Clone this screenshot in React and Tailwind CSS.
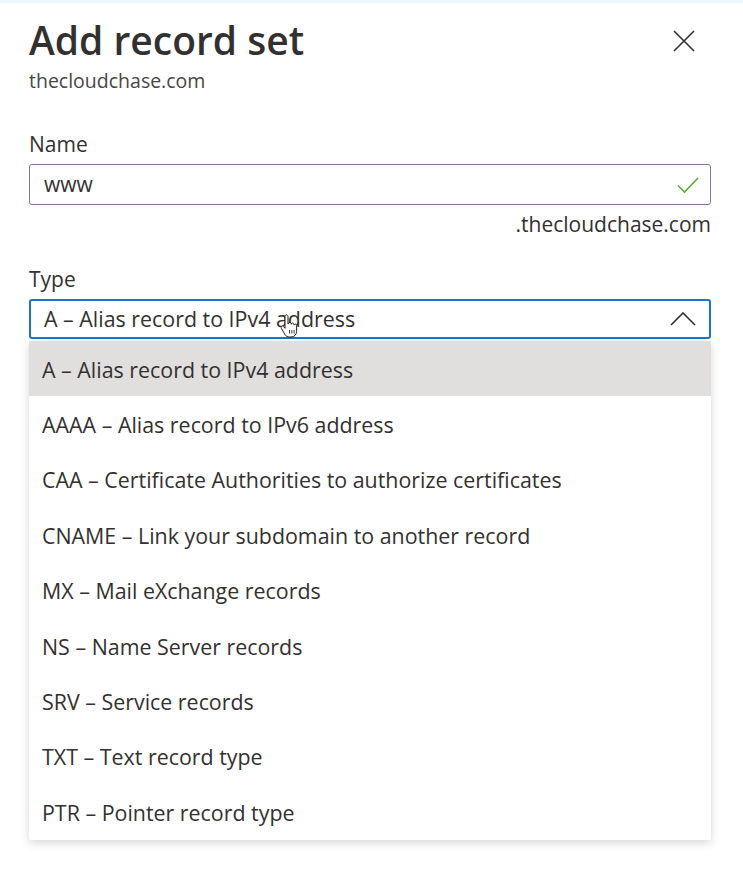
import React from "react";

const options = [
  "A – Alias record to IPv4 address",
  "AAAA – Alias record to IPv6 address",
  "CAA – Certificate Authorities to authorize certificates",
  "CNAME – Link your subdomain to another record",
  "MX – Mail eXchange records",
  "NS – Name Server records",
  "SRV – Service records",
  "TXT – Text record type",
  "PTR – Pointer record type",
];

export default function App() {
  return (
    <div
      className="w-[743px] h-[886px] bg-white text-[#323130] overflow-hidden"
      style={{ fontFamily: '"Open Sans", "Noto Sans", sans-serif' }}
    >
      <div className="h-[3px] bg-[#eaf8fb]" />
      <div className="pl-[29px] pr-[32px] pt-[14px]">
        <div className="flex items-start justify-between">
          <div>
            <h1 className="text-[39px] leading-[46px] font-semibold">Add record set</h1>
            <div className="text-[19.5px] leading-[26px] text-[#484644] mt-[5px]">thecloudchase.com</div>
          </div>
          <button className="mt-[10px] mr-[13px] w-[28px] h-[28px] flex items-center justify-center">
            <svg width="22" height="22" viewBox="0 0 22 22" fill="none" stroke="#323130" strokeWidth="1.6">
              <path d="M1 1 L21 21 M21 1 L1 21" />
            </svg>
          </button>
        </div>

        <div className="mt-[37px] text-[21px] leading-[26px]">Name</div>
        <div className="mt-[7px] h-[41px] border border-[#8e7096] rounded-[3px] flex items-center pl-[14px] pr-[11px]">
          <span className="flex-1 text-[21px]">www</span>
          <svg width="22" height="18" viewBox="0 0 22 18" fill="none" stroke="#5fa83a" strokeWidth="1.6">
            <path d="M1 9.5 L7.5 16 L21 2" />
          </svg>
        </div>
        <div className="mt-[6px] text-right text-[21px] leading-[26px] text-[#323130]">.thecloudchase.com</div>

        <div className="mt-[29px] text-[21px] leading-[26px]">Type</div>
        <div className="relative mt-[7px]">
          <div className="h-[40px] border-2 border-[#1a73c4] rounded-[3px] flex items-center pl-[13px] pr-[13px]">
            <span className="flex-1 text-[21.4px] pt-[1px]">A – Alias record to IPv4 address</span>
            <svg width="26" height="14" viewBox="0 0 26 14" fill="none" stroke="#323130" strokeWidth="1.6">
              <path d="M1 13 L13 1 L25 13" />
            </svg>
          </div>
          <svg className="absolute left-[251px] top-[15px]" width="18" height="24" viewBox="0 0 18 24">
            <path
              d="M5 2.5c0-1 .7-1.7 1.5-1.7S8 1.5 8 2.5V10l.3-.1c0-.9.7-1.5 1.5-1.5s1.4.6 1.4 1.5v.4c.1-.8.7-1.3 1.4-1.3.8 0 1.4.6 1.4 1.5v.6c.2-.6.7-1 1.3-1 .8 0 1.3.6 1.3 1.4v5.8c0 3.3-2.4 5.700-5.6 5.7H9.2c-1.8 0-3.1-.8-4.1-2.2L1.4 14.3c-.5-.7-.3-1.6.4-2 .6-.4 1.4-.3 1.9.3L5 14.3Z"
              fill="white"
              stroke="#222"
              strokeWidth="1"
            />
            <path d="M9.5 16v3.5M11.8 16v3.5M14.1 16v3.5" stroke="#222" strokeWidth="0.9" />
          </svg>
        </div>
        <div className="mt-[2px] bg-white shadow-[0_3px_10px_rgba(0,0,0,0.16)] rounded-[2px]">
          {options.map((o, i) => (
            <div
              key={o}
              className={`h-[55.4px] flex items-center pl-[13px] pt-[2px] text-[21.4px] ${i === 0 ? "bg-[#e1dfdd]" : ""}`}
            >
              {o}
            </div>
          ))}
        </div>
      </div>
    </div>
  );
}
